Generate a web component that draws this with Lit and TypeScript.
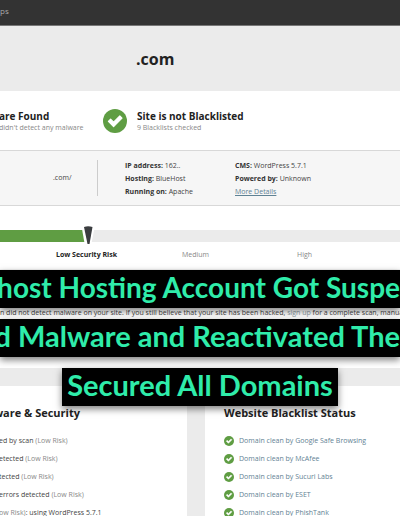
import { LitElement, html, css, svg } from "lit";
import { customElement } from "lit/decorators.js";

const check = svg`<circle cx="12" cy="12" r="12" fill="#5f9d43"></circle>
  <path d="M5.4 12.4 L7.6 10.2 L10.6 13.2 L16.8 7 L19 9.2 L10.6 17.6 Z" fill="#fff" stroke="#fff" stroke-width="1.2" stroke-linejoin="round"></path>`;

const risks = [
  ["ed by scan", "(Low Risk)", ""],
  ["etected", "(Low Risk)", ""],
  ["tected", "(Low Risk)", ""],
  ["errors detected", "(Low Risk)", ""],
  ["", "ow Risk)", ": using WordPress 5.7.1"],
];

const vendors = ["Google Safe Browsing", "McAfee", "Sucuri Labs", "ESET", "PhishTank"];

@customElement("app-root")
export class AppRoot extends LitElement {
  static styles = css`
    :host {
      display: block;
      position: relative;
      height: 100vh;
      overflow: hidden;
      background: #fff;
      color: #444;
      font: 7px/12px "Open Sans", sans-serif;
    }
    * { box-sizing: border-box; }
    h1, h2, h3, p, ul { margin: 0; padding: 0; }
    ul { list-style: none; }
    a { color: #5f8294; text-decoration: none; }
    svg { display: block; flex: none; }
    nav {
      height: 26px;
      background: #333;
      border-bottom: 1px solid #777;
      padding-top: 5px;
    }
    nav a { color: #aaa; font-size: 8px; }
    .banner {
      height: 65px;
      padding: 21px 0 0 136px;
      background: #ebebeb;
    }
    h1 { font-size: 16px; line-height: 24px; font-weight: 700; color: #222; }
    .status { display: flex; height: 59px; padding-top: 18px; }
    .found {
      display: flex;
      flex-direction: column;
      width: 104px;
      white-space: nowrap;
      margin-left: -1px;
    }
    .blacklist { display: flex; gap: 10px; }
    h2 { font-size: 10px; line-height: 14px; color: #222; }
    .status p { color: #888; line-height: 10px; }
    .details {
      display: flex;
      align-items: center;
      height: 56px;
      background: #f6f6f6;
      border-top: 1px solid #d8d8d8;
      border-bottom: 1px solid #d8d8d8;
    }
    .domain {
      width: 98px;
      height: 36px;
      padding: 12px 0 0 53px;
      border-right: 1px solid #ccc;
    }
    .facts { line-height: 13px; padding-left: 27px; width: 137px; }
    .facts b { color: #333; }
    .facts.second { padding-left: 0; }
    .more { text-decoration: underline; }
    .gauge { height: 64px; padding-top: 24px; border-bottom: 1px solid #f4f4f4; }
    .bar { display: flex; height: 12px; background: #ebebeb; }
    .fill { width: 22%; height: 12px; background: #5f9d43; flex: none; }
    .needle { margin: -4px 0 0 -6px; }
    .scale { display: flex; padding: 7px 0 0 56px; color: #888; }
    .scale span { flex: none; width: 115px; }
    .scale .high { width: auto; }
    .scale .low { color: #222; font-weight: 700; width: 126px; }
    .notice { height: 98px; padding-top: 37px; white-space: nowrap; }
    .notice a { color: #8d9ca4; }
    .cards {
      display: grid;
      grid-template-columns: 187px 1fr;
      gap: 18px;
      padding-top: 18px;
      background: #ebebeb;
      height: 149px;
    }
    .card { background: #fff; padding-top: 18px; white-space: nowrap; }
    .right { padding-left: 19px; }
    h3 { font-size: 11px; line-height: 18px; color: #222; }
    .left h3 { display: flex; justify-content: flex-end; width: 80px; }
    li { display: flex; align-items: center; height: 18px; }
    .card ul { padding-top: 10px; }
    .right li { gap: 5px; }
    .muted { color: #888; }
    .left ul { margin-left: -1px; }
    .left li { white-space: pre; }
    .title {
      position: absolute;
      top: 270px;
      left: 0;
      right: 0;
      display: flex;
      flex-direction: column;
      align-items: center;
      gap: 11px;
      color: #2fecaa;
      font: 700 29px/34px Lato, sans-serif;
      white-space: nowrap;
    }
    .line {
      display: flex;
      justify-content: flex-end;
      background: #000;
      box-shadow: 0 3px 7px rgba(0, 0, 0, 0.5);
      padding: 0 5px 4px;
    }
    .line.full { width: 100%; padding: 0 0 4px; }
    .line.long { font-size: 28px; }
  `;

  render() {
    return html`
      <nav><a href="#">ps</a></nav>
      <header class="banner"><h1>.com</h1></header>
      <section class="status">
        <div class="found"><h2>are Found</h2><p>didn't detect any malware</p></div>
        <div class="blacklist">
          <svg width="24" height="24" viewBox="0 0 24 24">${check}</svg>
          <div><h2>Site is not Blacklisted</h2><p>9 Blacklists checked</p></div>
        </div>
      </section>
      <section class="details">
        <div class="domain">.com/</div>
        <div class="facts">
          <p><b>IP address:</b> 162..</p>
          <p><b>Hosting:</b> BlueHost</p>
          <p><b>Running on:</b> Apache</p>
        </div>
        <div class="facts second">
          <p><b>CMS:</b> WordPress 5.7.1</p>
          <p><b>Powered by:</b> Unknown</p>
          <p><a class="more" href="#">More Details</a></p>
        </div>
      </section>
      <section class="gauge">
        <div class="bar">
          <div class="fill"></div>
          <svg class="needle" width="13" height="20" viewBox="0 0 13 20">
            <path d="M0 3H12V4L9 20H3Z" fill="#fff"></path>
            <path d="M2 1Q6 -0.5 10.5 1L7.5 18H5.5Z" fill="#3b3d40"></path>
          </svg>
        </div>
        <div class="scale"><span class="low">Low Security Risk</span><span>Medium</span><span class="high">High</span></div>
      </section>
      <p class="notice">n did not detect malware on your site. If you still believe that your site has been hacked, <a href="#">sign up</a> for a complete scan, manua</p>
      <section class="cards">
        <div class="card left">
          <h3>ware &amp; Security</h3>
          <ul>${risks.map(([a, b, c]) => html`<li>${a ? a + " " : ""}<span class="muted">${b}</span>${c}</li>`)}</ul>
        </div>
        <div class="card right">
          <h3>Website Blacklist Status</h3>
          <ul>${vendors.map((v) => html`<li>
            <svg width="10" height="10" viewBox="0 0 24 24">${check}</svg>
            <a href="#">Domain clean by ${v}</a></li>`)}</ul>
        </div>
      </section>
      <div class="title">
        <div class="line full long">host Hosting Account Got Suspe</div>
        <div class="line full">d Malware and Reactivated The</div>
        <div class="line">Secured All Domains</div>
      </div>
    `;
  }
}
